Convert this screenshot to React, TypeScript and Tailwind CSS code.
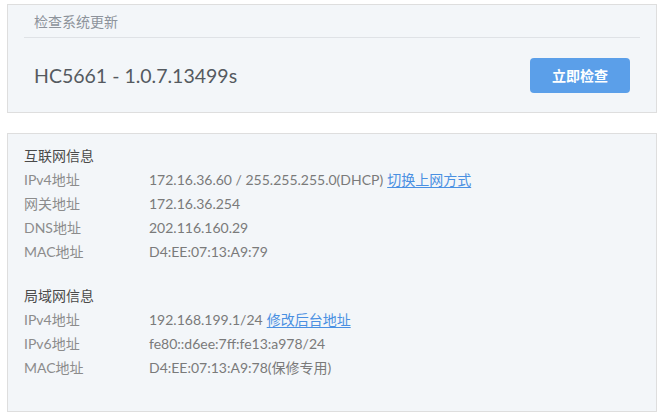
export default function App() {
    const wan = [
        { label: "IPv4地址", value: "172.16.36.60 / 255.255.255.0(DHCP)", link: "切换上网方式" },
        { label: "网关地址", value: "172.16.36.254" },
        { label: "DNS地址", value: "202.116.160.29" },
        { label: "MAC地址", value: "D4:EE:07:13:A9:79" },
    ]
    const lan = [
        { label: "IPv4地址", value: "192.168.199.1/24", link: "修改后台地址" },
        { label: "IPv6地址", value: "fe80::d6ee:7ff:fe13:a978/24" },
        { label: "MAC地址", value: "D4:EE:07:13:A9:78(保修专用)" },
    ]

    const renderRows = (rows: { label: string; value: string; link?: string }[]) =>
        rows.map((row) => (
            <div key={row.label} className="flex h-6 items-center">
                <span className="w-[125px] text-[#8c8c8c]">{row.label}</span>
                <span className="text-[#7a7a7a]">
                    {row.value}
                    {row.link && (
                        <a href="#" className="ml-1 text-[#4a90e2] underline underline-offset-2">
                            {row.link}
                        </a>
                    )}
                </span>
            </div>
        ))

    return (
        <div
            className="flex w-[669px] flex-col gap-[20px] bg-white pt-1 pl-[7px] pr-[12px] text-[14px]"
            style={{ fontFamily: "Lato, 'Noto Sans CJK SC', sans-serif" }}
        >
            <section className="border border-[#dedede] bg-[#f3f6f9] px-4">
                <div className="flex h-[33px] items-center border-b border-[#dfe2e6] pl-[10px] text-[#8d939b]">
                    检查系统更新
                </div>
                <div className="flex items-center justify-between pt-5 pb-[19px] pl-[10px] pr-[10px]">
                    <h2 className="text-[19.5px] text-[#555a60]">HC5661 - 1.0.7.13499s</h2>
                    <button
                        type="button"
                        className="h-[35px] w-[100px] rounded-[4px] bg-[#5b9fe9] text-[14px] font-bold text-white"
                    >
                        立即检查
                    </button>
                </div>
            </section>

            <section className="border border-[#dedede] bg-[#f3f6f9] px-4 pt-[9px] pb-[32px]">
                <div className="flex h-6 items-center text-[#4a4a4a]">互联网信息</div>
                {renderRows(wan)}
                <div className="mt-5 flex h-6 items-center text-[#4a4a4a]">局域网信息</div>
                {renderRows(lan)}
            </section>
        </div>
    )
}
